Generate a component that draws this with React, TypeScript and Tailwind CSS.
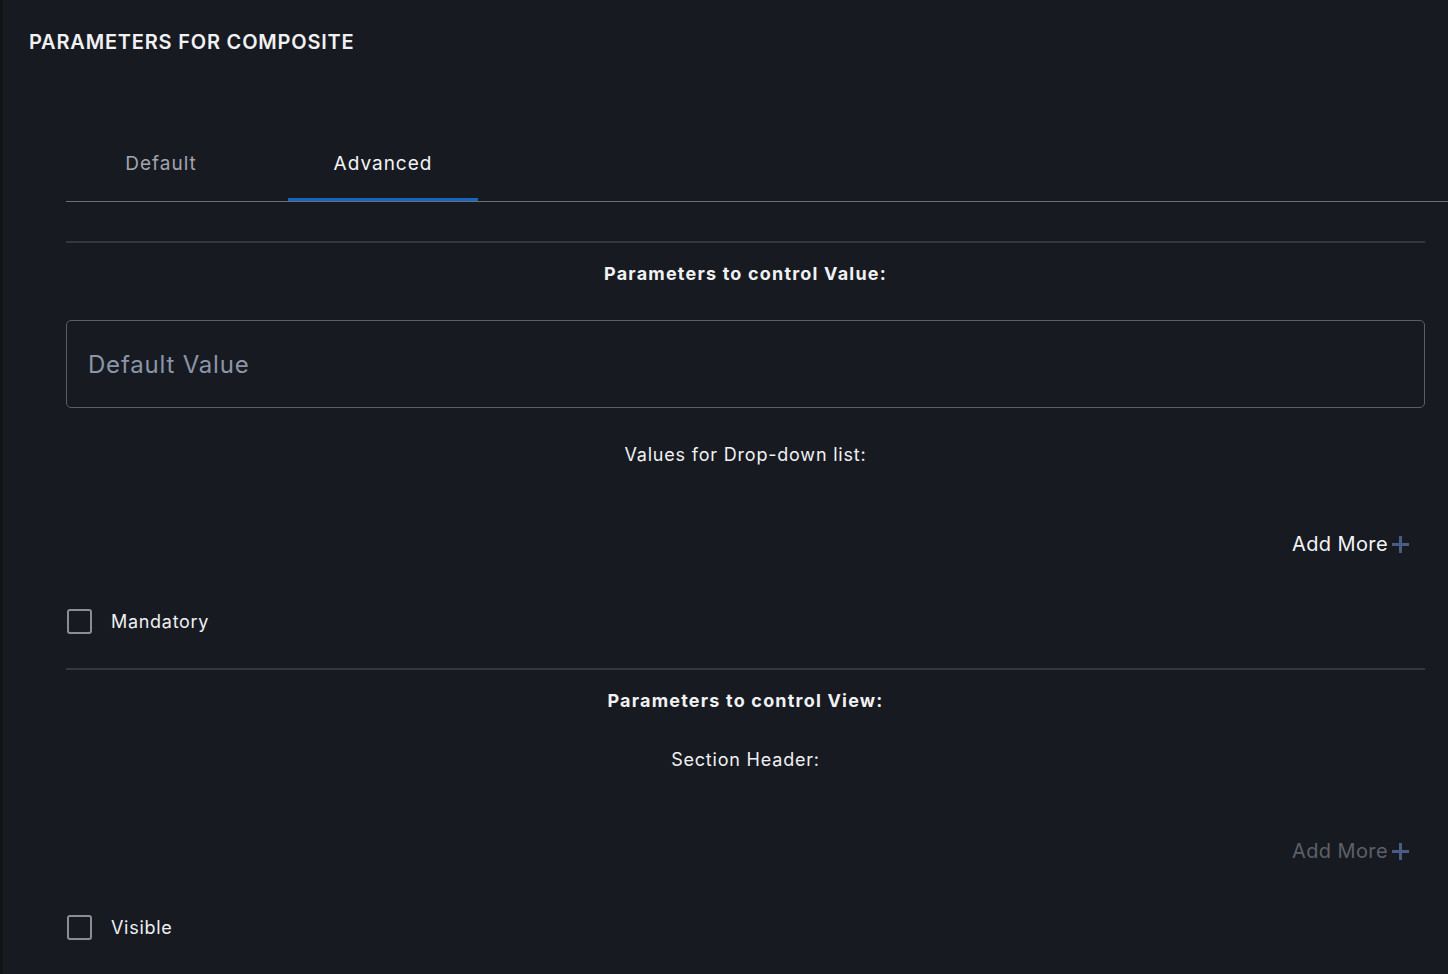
type CheckProps = { label: string };

function CheckRow({ label }: CheckProps) {
  return (
    <label className="flex items-center gap-[19px] pl-px">
      <span className="h-[25px] w-[25px] rounded-[3px] border-2 border-[#8c8d90]" />
      <span className="text-[18px] tracking-[0.7px] text-[#eef0f3]">{label}</span>
    </label>
  );
}

function AddMore({ muted }: { muted?: boolean }) {
  return (
    <div className="flex justify-end pr-[15px]">
      <button
        className={
          muted
            ? "flex items-center gap-[3px] text-[20px] tracking-[0.4px] text-[#5d6068]"
            : "flex items-center gap-[3px] text-[20px] tracking-[0.4px] text-[#f3f4f6]"
        }
      >
        Add More
        <svg width="19" height="19" viewBox="0 0 19 19" className="text-[#4a5b85]">
          <path d="M9.5 1v17M1 9.5h17" stroke="currentColor" strokeWidth="3" />
        </svg>
      </button>
    </div>
  );
}

export default function App() {
  return (
    <div className="flex min-h-[974px] w-full bg-[#181a21] font-['Inter',sans-serif] text-[#f0f1f3]">
      {/* sliver of the side rail */}
      <div className="w-[3px] shrink-0 bg-[#111317]" />

      <div className="flex-1">
        <h1 className="pl-[26px] pt-[27px] text-[20px] font-semibold tracking-[0.8px]">
          PARAMETERS FOR COMPOSITE
        </h1>

        <div className="ml-[63px] mt-[75px]">
          <div className="flex gap-[32px] border-b border-[#6c6f76]">
            <button className="h-[69px] w-[190px] pb-[4px] text-[19px] tracking-[1px] text-[#a2a5ab]">
              Default
            </button>
            <button className="h-[69px] w-[190px] border-b-[3px] border-[#1565c0] pb-[1px] text-[19px] tracking-[1px] text-[#f3f4f6]">
              Advanced
            </button>
          </div>

          <div className="mr-[23px] mt-[39px] border-t-2 border-[#34373d]">
            <h2 className="pt-[17px] text-center text-[18px] font-bold tracking-[1.2px]">
              Parameters to control Value:
            </h2>

            <input
              placeholder="Default Value"
              className="mt-[33px] h-[88px] w-full rounded-[5px] border border-[#5b5e65] bg-transparent px-[21px] text-[24px] tracking-[0.8px] placeholder:text-[#8b95a8]"
            />

            <p className="mt-[33px] text-center text-[18px] tracking-[0.8px]">
              Values for Drop-down list:
            </p>

            <div className="mt-[61px]">
              <AddMore />
            </div>

            <div className="mt-[49px]">
              <CheckRow label="Mandatory" />
            </div>
          </div>

          <div className="mr-[23px] mt-[33px] border-t-2 border-[#34373d]">
            <h2 className="pt-[17px] text-center text-[18px] font-bold tracking-[1.2px]">
              Parameters to control View:
            </h2>

            <p className="mt-[32px] text-center text-[18px] tracking-[0.8px]">
              Section Header:
            </p>

            <div className="mt-[63px]">
              <AddMore muted />
            </div>

            <div className="mt-[48px]">
              <CheckRow label="Visible" />
            </div>
          </div>
        </div>
      </div>
    </div>
  );
}
